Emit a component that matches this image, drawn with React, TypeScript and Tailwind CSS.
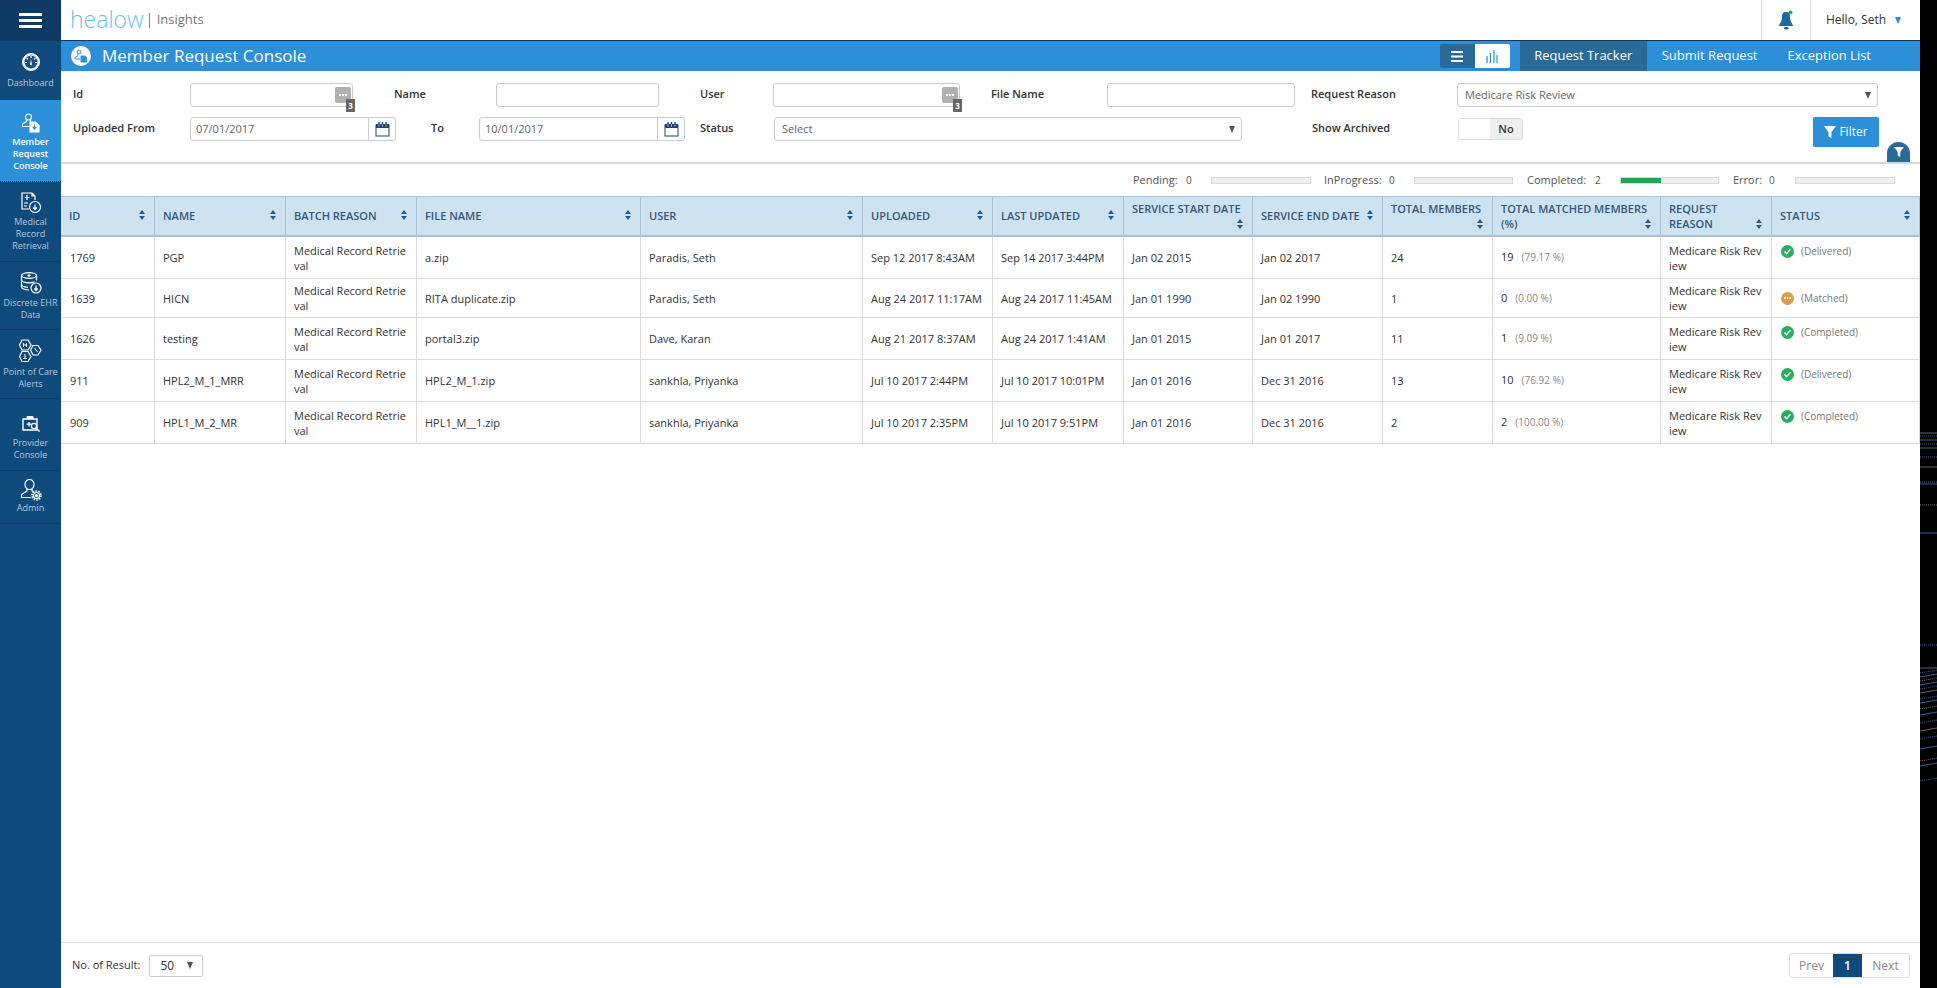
import React from "react";

const Caret = ({ c = "#555" }: { c?: string }) => (
  <svg width="6" height="7" viewBox="0 0 6 7"><path d="M0 0h6L3 7z" fill={c} /></svg>
);

const Sort = () => (
  <svg width="6" height="10" viewBox="0 0 6 10" className="shrink-0"><path d="M3 0l3 4H0zM3 10L0 6h6z" fill="#2c5a86" /></svg>
);

const Cal = () => (
  <svg width="15" height="15" viewBox="0 0 15 15">
    <rect x="1" y="3" width="13" height="11" fill="#fff" stroke="#1f4468" strokeWidth="1" />
    <rect x="1" y="2" width="13" height="4" fill="#1f4468" />
    <path d="M4 0v4M7.500 0v4M11 0v4" stroke="#1f4468" strokeWidth="1.400" />
    <path d="M4 2.500v2M7.500 2.500v2M11 2.500v2" stroke="#fff" strokeWidth="0.700" />
  </svg>
);

const Funnel = ({ s = 12 }: { s?: number }) => (
  <svg width={s} height={s} viewBox="0 0 12 12"><path d="M0 0h12L7.500 6v6l-3-1.500V6z" fill="#fff" /></svg>
);

const I = { fill: "none", stroke: "#fff", strokeWidth: 1.2 };

const IDash = () => (
  <svg width="20" height="20" viewBox="0 0 20 20">
    <circle cx="10" cy="10" r="8.500" fill="#e8f0f6" stroke="#fff" />
    <circle cx="10" cy="10" r="6.500" fill="#1a4f7d" />
    <path d="M10 4v2M5.500 6l1.400 1.400M14.500 6l-1.400 1.400M4 10.500h2M14 10.500h2" stroke="#fff" strokeWidth="1.200" />
    <path d="M10 7l-1 6h2z" fill="#fff" />
  </svg>
);
const IMember = () => (
  <svg width="20" height="20" viewBox="0 0 20 20" {...I}>
    <circle cx="7.500" cy="4" r="3" />
    <path d="M5.500 6.500v2L1.500 11v2.500h6.500M9.500 6.500v2" />
    <path d="M9 9h5.500L18 12.500V19H9z" fill="#fff" />
    <path d="M13.500 11.500v4M11.800 14l1.700 2 1.700-2" stroke="#2b90d9" />
  </svg>
);
const IMedical = () => (
  <svg width="22" height="22" viewBox="0 0 22 22" {...I}>
    <path d="M9 17H2V1h10l3 3v4" />
    <path d="M12 1v3h3" fill="#fff" />
    <path d="M7 3v5M4.500 5.500h5M4 11h4M4 14h3" />
    <circle cx="15" cy="15" r="5.500" />
    <path d="M15 12.500v4.500M13.200 15.500l1.800 2 1.800-2" />
  </svg>
);
const IDisc = () => (
  <svg width="22" height="22" viewBox="0 0 22 22" {...I}>
    <ellipse cx="9" cy="3.500" rx="7.500" ry="2.800" />
    <path d="M1.500 3.500v11.500c0 1.500 3.500 3 7.500 3M16.500 3.500v5M1.500 8c0 1.500 3.500 2.800 7.500 2.800 2 0 4-.3 5.500-.9M1.500 12.500c0 1.500 3 2.800 6.500 2.800" />
    <path d="M9 1.800v3.400M7.300 3.500h3.400" />
    <circle cx="16" cy="16" r="5" />
    <path d="M16 13.500v4.500M14.300 16.500l1.700 2 1.700-2" />
  </svg>
);
const IPoint = () => (
  <svg width="23" height="23" viewBox="0 0 23 23" {...I}>
    <path d="M3 1h6l3 5-3 5H3L0.500 6z" />
    <path d="M3 12.500h6l3 5-3 5H3l-2.500-5z" />
    <path d="M14 6.500h5l3 4.500-3 5h-5l-2.500-5z" />
    <path d="M4.500 4v4M7.500 4v4M4.500 6h3M6 15v4M4 19.500h4M15.500 9l3 4" strokeWidth="1" />
  </svg>
);
const IProv = () => (
  <svg width="20" height="20" viewBox="0 0 20 20">
    <path d="M2 5h14v11H2z" fill="none" stroke="#fff" strokeWidth="1.400" />
    <path d="M6 5V2.500h6V5" fill="#fff" stroke="#fff" />
    <path d="M8 8v4.500M5.700 10.200h4.600" stroke="#fff" strokeWidth="1.300" />
    <circle cx="13" cy="12" r="2.600" fill="#0e4a7b" stroke="#fff" strokeWidth="1.300" />
    <path d="M15 14l3.500 3.500" stroke="#fff" strokeWidth="1.600" />
  </svg>
);
const IAdmin = () => (
  <svg width="22" height="22" viewBox="0 0 22 22" {...I}>
    <ellipse cx="9.500" cy="5.500" rx="4.500" ry="5" />
    <path d="M7 10v2L1.500 15.500v3h9.500M12 10v2l1.500 1" />
    <circle cx="16.500" cy="16.500" r="3" fill="#0e4a7b" />
    <circle cx="16.500" cy="16.500" r="4.500" strokeDasharray="1.600 1.200" strokeWidth="1.600" />
    <circle cx="16.500" cy="16.500" r="1" fill="#fff" />
  </svg>
);

const nav = [
  { l: ["Dashboard"], i: <IDash />, h: "h-[59px]", pt: "pt-[11px]", ih: "h-[20px]", mt: "mt-[5px]" },
  { l: ["Member", "Request", "Console"], i: <IMember />, h: "h-[82px]", pt: "pt-[13px]", ih: "h-[20px]", mt: "mt-[3px]", a: true },
  { l: ["Medical", "Record", "Retrieval"], i: <IMedical />, h: "h-[80px]", pt: "pt-[10px]", ih: "h-[22px]", mt: "mt-[2px]" },
  { l: ["Discrete EHR", "Data"], i: <IDisc />, h: "h-[68px]", pt: "pt-[10px]", ih: "h-[22px]", mt: "mt-[3px]" },
  { l: ["Point of Care", "Alerts"], i: <IPoint />, h: "h-[69px]", pt: "pt-[9px]", ih: "h-[23px]", mt: "mt-[4px]" },
  { l: ["Provider", "Console"], i: <IProv />, h: "h-[72px]", pt: "pt-[15px]", ih: "h-[20px]", mt: "mt-[3px]" },
  { l: ["Admin"], i: <IAdmin />, h: "h-[53px]", pt: "pt-[8px]", ih: "h-[22px]", mt: "mt-[1px]" },
];

const Sidebar = () => (
  <div className="w-[61px] shrink-0 bg-[#0e4a7b] flex flex-col">
    <div className="h-[41px] bg-[#0f3a63] flex items-center justify-center">
      <svg width="23" height="15" viewBox="0 0 23 15"><path d="M0 0h23v3H0zM0 6h23v3H0zM0 12h23v3H0z" fill="#fff" /></svg>
    </div>
    {nav.map((n) => (
      <div
        key={n.l[0]}
        className={`${n.h} ${n.pt} flex flex-col items-center border-b border-dotted border-[#0a3157] ${n.a ? "bg-[#2b90d9] text-white font-semibold" : "text-[#b4c8da]"}`}
      >
        <div className={`${n.ih} flex items-center justify-center`}>{n.i}</div>
        <div className={`${n.mt} text-[9px] leading-[12px] text-center whitespace-nowrap`}>
          {n.l.map((t) => (
            <div key={t}>{t}</div>
          ))}
        </div>
      </div>
    ))}
  </div>
);

const TopBar = () => (
  <div className="h-[41px] shrink-0 bg-white border-b border-[#123a5e] flex items-stretch">
    <div className="flex items-center pl-[9px]">
      <span className="text-[23px] leading-[32px] font-light text-[#6ec1ea] pb-[3px]">healow</span>
      <span className="w-px h-[15px] bg-[#888] ml-[5px]" />
      <span className="ml-[7px] text-[13px] text-[#777]">Insights</span>
    </div>
    <div className="ml-auto flex items-stretch">
      <div className="w-[49px] border-l border-[#ddd] flex items-center justify-center">
        <svg width="16" height="21" viewBox="0 0 16 21">
          <path d="M8 2c3 0 4 2 4 5 0 5 3 7 3 9H1c0-2 3-4 3-9 0-3 1-5 4-5z" fill="#1d67a3" />
          <rect x="6" y="17" width="4.500" height="2.500" rx="1.200" fill="#1d67a3" />
          <circle cx="12.500" cy="2.500" r="2" fill="#1fae4b" />
        </svg>
      </div>
      <div className="w-[110px] border-l border-[#ddd] flex items-center pl-[15px] gap-[9px] text-[12px] text-[#333]">
        <span>Hello, Seth</span>
        <Caret c="#2b90d9" />
      </div>
    </div>
  </div>
);

const BlueBar = () => (
  <div className="h-[30px] shrink-0 bg-[#2b90d9] flex items-center text-white">
    <div className="ml-[10px] w-[20px] h-[20px] rounded-full bg-white flex items-center justify-center">
      <svg width="14" height="14" viewBox="0 0 14 14" fill="none" stroke="#2b90d9" strokeWidth="1">
        <circle cx="5" cy="3" r="2" />
        <path d="M4 5v1.500L1 8.500v1.500h5" />
        <path d="M7 7h4l1.500 1.500V13H7z" fill="#2b90d9" />
      </svg>
    </div>
    <div className="ml-[11px] text-[17px]">Member Request Console</div>
    <div className="ml-auto flex items-center h-full pr-[49px]">
      <div className="flex w-[70px] h-[24px] rounded-[2px] overflow-hidden">
        <div className="w-[35px] bg-[#2a6a99] flex items-center justify-center">
          <svg width="12" height="11" viewBox="0 0 12 11"><path d="M0 0h12v2H0zM0 4.500h12v2H0zM0 9h12v2H0z" fill="#fff" /></svg>
        </div>
        <div className="w-[35px] bg-white flex items-center justify-center">
          <svg width="12" height="13" viewBox="0 0 12 13"><path d="M1 6v7M4.500 3v10M8 0v13M11 5v8" stroke="#2b90d9" strokeWidth="1.200" /></svg>
        </div>
      </div>
      <div className="ml-[10px] w-[127px] h-full bg-[#2a6a99] flex items-center justify-center text-[13px]">Request Tracker</div>
      <div className="ml-[15px] text-[13px]">Submit Request</div>
      <div className="ml-[30px] text-[13px]">Exception List</div>
    </div>
  </div>
);

const inputCls = "h-[24px] shrink-0 border border-[#ccc] rounded-[3px] bg-white outline-none px-[5px] text-[11px] text-[#666]";

const Lookup = ({ w }: { w: string }) => (
  <div className={`relative ${w} ${inputCls}`}>
    <div className="absolute right-[1px] top-[3px] w-[16px] h-[16px] rounded-[2px] bg-[#b0b0b0] flex items-center justify-center gap-[1px]">
      <span className="w-[2px] h-[2px] bg-white" />
      <span className="w-[2px] h-[2px] bg-white" />
      <span className="w-[2px] h-[2px] bg-white" />
    </div>
    <div className="absolute right-[-3px] top-[15px] w-[9px] h-[13px] bg-[#666] text-white text-[8px] leading-[13px] font-bold text-center">3</div>
  </div>
);

const DateBox = ({ w, v }: { w: string; v: string }) => (
  <div className={`${w} h-[24px] shrink-0 border border-[#ccc] rounded-[3px] flex text-[11px] text-[#666]`}>
    <div className="flex-1 flex items-center pl-[5px]">{v}</div>
    <div className="w-[27px] border-l border-[#ccc] flex items-center justify-center"><Cal /></div>
  </div>
);

const SelectBox = ({ w, v }: { w: string; v: string }) => (
  <div className={`${w} ${inputCls} flex items-center justify-between pl-[7px] pr-[6px]`}>
    <span>{v}</span>
    <Caret />
  </div>
);

const Lbl = ({ w, ml, t }: { w: string; ml?: string; t: string }) => (
  <div className={`${w} ${ml ?? ""} shrink-0 h-[24px] flex items-center pb-[2px] text-[11px] font-semibold text-[#333] whitespace-nowrap`}>{t}</div>
);

const Filters = () => (
  <div className="relative h-[93px] shrink-0 border-b-2 border-[#d8d8d8] pt-[12px] pl-[11px] flex flex-col gap-[10px]">
    <div className="flex">
      <Lbl w="w-[118px] pl-px" t="Id" />
      <Lookup w="w-[163px]" />
      <Lbl w="w-[102px]" ml="ml-[41px]" t="Name" />
      <input readOnly className={`w-[163px] ${inputCls}`} />
      <Lbl w="w-[73px]" ml="ml-[41px]" t="User" />
      <Lookup w="w-[187px]" />
      <Lbl w="w-[116px]" ml="ml-[31px]" t="File Name" />
      <input readOnly className={`w-[188px] ${inputCls}`} />
      <Lbl w="w-[146px]" ml="ml-[16px]" t="Request Reason" />
      <SelectBox w="w-[421px]" v="Medicare Risk Review" />
    </div>
    <div className="flex items-start">
      <Lbl w="w-[118px] pl-px" t="Uploaded From" />
      <DateBox w="w-[206px]" v="07/01/2017" />
      <Lbl w="w-[48px]" ml="ml-[35px]" t="To" />
      <DateBox w="w-[206px]" v="10/01/2017" />
      <Lbl w="w-[74px]" ml="ml-[15px]" t="Status" />
      <SelectBox w="w-[468px]" v="Select" />
      <Lbl w="w-[146px]" ml="ml-[70px]" t="Show Archived" />
      <div className="w-[65px] h-[22px] mt-[1px] border border-[#ddd] rounded-[3px] flex overflow-hidden">
        <div className="flex-1 bg-white" />
        <div className="w-[32px] bg-[#eeeeee] flex items-center justify-center text-[11px] text-[#333] font-semibold">No</div>
      </div>
      <div className="ml-[290px] w-[66px] h-[30px] bg-[#2b90d9] rounded-[2px] flex items-center justify-center gap-[3px] text-white text-[12px]">
        <Funnel />
        <span>Filter</span>
      </div>
    </div>
    <div className="absolute right-[10px] bottom-0 w-[23px] h-[20px] rounded-t-full bg-[#2a6a99] flex items-center justify-center"><Funnel s={10} /></div>
  </div>
);

const Stat = ({ l, lw, c, cw, bw, ml, pct }: { l: string; lw: string; c: string; cw: string; bw: string; ml: string; pct?: boolean }) => (
  <div className={`flex items-center ${ml}`}>
    <div className={`${lw} text-[11px] text-[#555] whitespace-nowrap`}>{l}</div>
    <div className={`${cw} text-[10px] text-[#555]`}>{c}</div>
    <div className={`${bw} h-[7px] bg-[#efefef] border border-[#d8d8d8] flex`}>{pct && <div className="w-[40px] bg-[#22a559]" />}</div>
  </div>
);

const StatusRow = () => (
  <div className="h-[32px] shrink-0 flex items-center justify-end pr-[25px]">
    <Stat l="Pending:" lw="w-[53px]" c="0" cw="w-[25px]" bw="w-[100px]" ml="" />
    <Stat l="InProgress:" lw="w-[65px]" c="0" cw="w-[25px]" bw="w-[99px]" ml="ml-[13px]" />
    <Stat l="Completed:" lw="w-[68px]" c="2" cw="w-[25px]" bw="w-[99px]" ml="ml-[14px]" pct />
    <Stat l="Error:" lw="w-[36px]" c="0" cw="w-[26px]" bw="w-[100px]" ml="ml-[14px]" />
  </div>
);

const colW = ["w-[94px]", "w-[131px]", "w-[131px]", "w-[224px]", "w-[222px]", "w-[130px]", "w-[131px]", "w-[129px]", "w-[130px]", "w-[110px]", "w-[168px]", "w-[111px]", "w-[148px]"];

const heads: { a: string; b?: string }[] = [
  { a: "ID" },
  { a: "NAME" },
  { a: "BATCH REASON" },
  { a: "FILE NAME" },
  { a: "USER" },
  { a: "UPLOADED" },
  { a: "LAST UPDATED" },
  { a: "SERVICE START DATE", b: "" },
  { a: "SERVICE END DATE" },
  { a: "TOTAL MEMBERS", b: "" },
  { a: "TOTAL MATCHED MEMBERS", b: "(%)" },
  { a: "REQUEST", b: "REASON" },
  { a: "STATUS" },
];

type Row = { id: string; name: string; file: string; user: string; up: string; last: string; s: string; e: string; tot: string; m: string; p: string; st: string; h: string };

const rows: Row[] = [
  { id: "1769", name: "PGP", file: "a.zip", user: "Paradis, Seth", up: "Sep 12 2017 8:43AM", last: "Sep 14 2017 3:44PM", s: "Jan 02 2015", e: "Jan 02 2017", tot: "24", m: "19", p: "(79.17 %)", st: "Delivered", h: "h-[42px]" },
  { id: "1639", name: "HICN", file: "RITA duplicate.zip", user: "Paradis, Seth", up: "Aug 24 2017 11:17AM", last: "Aug 24 2017 11:45AM", s: "Jan 01 1990", e: "Jan 02 1990", tot: "1", m: "0", p: "(0.00 %)", st: "Matched", h: "h-[39px]" },
  { id: "1626", name: "testing", file: "portal3.zip", user: "Dave, Karan", up: "Aug 21 2017 8:37AM", last: "Aug 24 2017 1:41AM", s: "Jan 01 2015", e: "Jan 01 2017", tot: "11", m: "1", p: "(9.09 %)", st: "Completed", h: "h-[42px]" },
  { id: "911", name: "HPL2_M_1_MRR", file: "HPL2_M_1.zip", user: "sankhla, Priyanka", up: "Jul 10 2017 2:44PM", last: "Jul 10 2017 10:01PM", s: "Jan 01 2016", e: "Dec 31 2016", tot: "13", m: "10", p: "(76.92 %)", st: "Delivered", h: "h-[42px]" },
  { id: "909", name: "HPL1_M_2_MR", file: "HPL1_M__1.zip", user: "sankhla, Priyanka", up: "Jul 10 2017 2:35PM", last: "Jul 10 2017 9:51PM", s: "Jan 01 2016", e: "Dec 31 2016", tot: "2", m: "2", p: "(100.00 %)", st: "Completed", h: "h-[42px]" },
];

const td = "px-[8px] border-r border-b border-[#dcdcdc] align-middle whitespace-nowrap";
const one = `${td} pt-[2px]`;

const StatusCell = ({ st }: { st: string }) => {
  const ok = st !== "Matched";
  return (
    <div className={`flex items-center gap-[7px] pl-px ${ok ? "pb-[13px]" : ""}`}>
      <span className={`w-[13px] h-[13px] rounded-full flex items-center justify-center ${ok ? "bg-[#27ae60]" : "bg-[#dd9c4e]"}`}>
        {ok ? (
          <svg width="9" height="9" viewBox="0 0 9 9"><path d="M1.500 4.500l2 2.200 4-4.500" fill="none" stroke="#fff" strokeWidth="1.500" /></svg>
        ) : (
          <svg width="9" height="3" viewBox="0 0 9 3"><path d="M1 0h1.600v2H1zM3.700 0h1.600v2H3.700zM6.400 0H8v2H6.400z" fill="#fff" /></svg>
        )}
      </span>
      <span className="text-[10px] text-[#777]">({st})</span>
    </div>
  );
};

const Table = () => (
  <table className="table-fixed w-[1859px] border-separate border-spacing-0 text-[11px] text-[#333]">
    <colgroup>
      {colW.map((w, i) => (
        <col key={i} className={w} />
      ))}
    </colgroup>
    <thead>
      <tr className="h-[41px]">
        {heads.map((h) => (
          <th key={h.a} className="px-[8px] pr-[9px] bg-[#cde3f1] border-t border-r border-b-2 border-[#a9c1d2] text-left align-middle font-semibold text-[11px] leading-[15px] text-[#35587c] whitespace-nowrap">
            {h.b === undefined ? (
              <div className="flex items-center justify-between pb-[2px]">
                <span>{h.a}</span>
                <Sort />
              </div>
            ) : (
              <div className="flex flex-col">
                <span>{h.a}</span>
                <div className="flex items-center justify-between h-[15px]">
                  <span>{h.b}</span>
                  <Sort />
                </div>
              </div>
            )}
          </th>
        ))}
      </tr>
    </thead>
    <tbody>
      {rows.map((r) => (
        <tr key={r.id} className={r.h}>
          <td className={`${one} pl-[9px]`}>{r.id}</td>
          <td className={one}>{r.name}</td>
          <td className={`${td} leading-[15px]`}>Medical Record Retrie<br />val</td>
          <td className={one}>{r.file}</td>
          <td className={one}>{r.user}</td>
          <td className={one}>{r.up}</td>
          <td className={one}>{r.last}</td>
          <td className={one}>{r.s}</td>
          <td className={one}>{r.e}</td>
          <td className={one}>{r.tot}</td>
          <td className={td}>
            <span>{r.m}</span>
            <span className="ml-[8px] text-[10px] text-[#888]">{r.p}</span>
          </td>
          <td className={`${td} leading-[15px]`}>Medicare Risk Rev<br />iew</td>
          <td className={td}><StatusCell st={r.st} /></td>
        </tr>
      ))}
    </tbody>
  </table>
);

const Footer = () => (
  <div className="h-[46px] shrink-0 border-t border-[#dcdcdc] flex items-center pl-[11px] pr-[10px] text-[11px] text-[#333]">
    <span>No. of Result:</span>
    <div className="ml-[9px] w-[54px] h-[22px] border border-[#ccc] rounded-[2px] flex items-center justify-between pl-[10px] pr-[9px] text-[12px]">
      <span>50</span>
      <Caret />
    </div>
    <div className="ml-auto w-[121px] h-[25px] border border-[#ddd] rounded-[3px] flex text-[12px] text-[#888]">
      <div className="flex-1 flex items-center justify-center">Prev</div>
      <div className="w-[29px] bg-[#0e4a7b] text-white font-semibold flex items-center justify-center">1</div>
      <div className="w-[47px] flex items-center justify-center">Next</div>
    </div>
  </div>
);

const streaks = [433, 436, 440, 444, 448, 457, 467, 482, 484, 505, 533, 645, 668, 672, 676, 680, 684, 688, 692, 698, 702, 708, 714, 722, 730, 738, 748, 760, 765, 780];

const Strip = () => (
  <div className="w-[17px] shrink-0 bg-black">
    <svg width="17" height="988" viewBox="0 0 17 988">
      {streaks.map((y, i) => (
        <path key={y} d={`M0 ${y + (i > 12 ? 1 : 0)}L17 ${y - (i > 12 ? 2 : 0)}`} stroke={i % 3 === 0 ? "#6b6060" : "#2f5f8f"} strokeWidth="1" strokeDasharray={i % 2 ? "1 1" : undefined} />
      ))}
    </svg>
  </div>
);

export default function App() {
  return (
    <div className="flex w-[1937px] h-[988px] overflow-hidden bg-white font-['Open_Sans',sans-serif]">
      <Sidebar />
      <div className="flex-1 min-w-0 flex flex-col">
        <TopBar />
        <BlueBar />
        <Filters />
        <StatusRow />
        <div className="flex-1">
          <Table />
        </div>
        <Footer />
      </div>
      <Strip />
    </div>
  );
}
